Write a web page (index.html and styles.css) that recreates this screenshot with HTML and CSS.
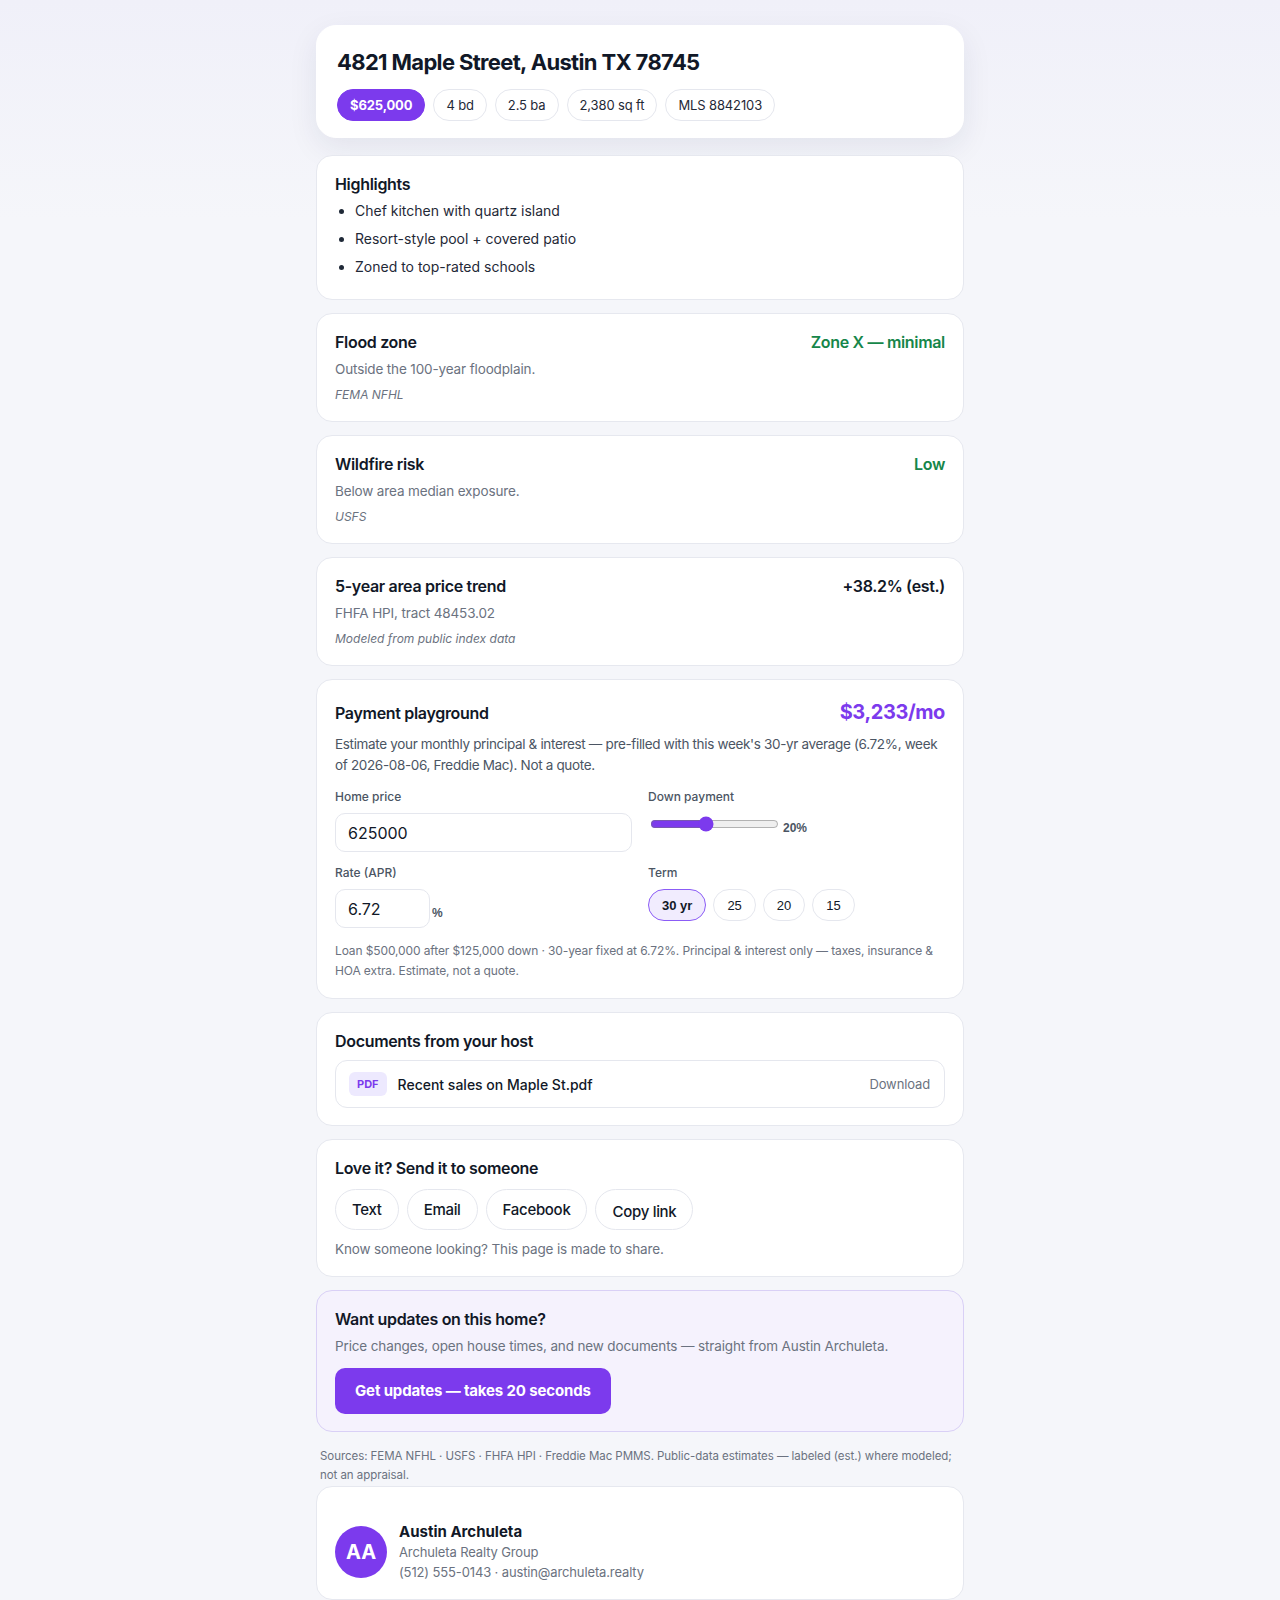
FILE: index.html
```html
<!DOCTYPE html>
<html lang="en">
<head>
    <meta charset="UTF-8">
    <title>4821 Maple Street, Austin TX 78745</title>
    <meta name="viewport" content="width=device-width, initial-scale=1.0">
    <link rel="stylesheet" href="styles.css">
</head>
<body>
    <main class="page">
        <header class="card hero">
            <h1>4821 Maple Street, Austin TX 78745</h1>
            <div class="pills">
                <span class="pill price">$625,000</span>
                <span class="pill">4 bd</span>
                <span class="pill">2.5 ba</span>
                <span class="pill">2,380 sq ft</span>
                <span class="pill">MLS 8842103</span>
            </div>
        </header>

        <section class="card">
            <h2>Highlights</h2>
            <ul class="highlights">
                <li>Chef kitchen with quartz island</li>
                <li>Resort-style pool + covered patio</li>
                <li>Zoned to top-rated schools</li>
            </ul>
        </section>

        <section class="card fact">
            <div class="head">
                <h2>Flood zone</h2>
                <span class="value good">Zone X — minimal</span>
            </div>
            <p class="sub">Outside the 100-year floodplain.</p>
            <p class="src">FEMA NFHL</p>
        </section>

        <section class="card fact">
            <div class="head">
                <h2>Wildfire risk</h2>
                <span class="value good">Low</span>
            </div>
            <p class="sub">Below area median exposure.</p>
            <p class="src">USFS</p>
        </section>

        <section class="card fact">
            <div class="head">
                <h2>5-year area price trend</h2>
                <span class="value">+38.2% (est.)</span>
            </div>
            <p class="sub">FHFA HPI, tract 48453.02</p>
            <p class="src">Modeled from public index data</p>
        </section>

        <section class="card calc">
            <div class="head">
                <h2>Payment playground</h2>
                <span class="monthly" id="monthly">$3,233/mo</span>
            </div>
            <p class="intro">Estimate your monthly principal &amp; interest — pre-filled with this week's 30-yr average (6.72%, week of 2026-08-06, Freddie Mac). Not a quote.</p>
            <div class="fields">
                <label class="field">
                    <span class="label">Home price</span>
                    <input class="text-input" id="price" type="text" value="625000">
                </label>
                <div class="field">
                    <span class="label">Down payment</span>
                    <div class="inline">
                        <input id="down" type="range" min="5" max="40" value="20">
                        <output class="unit" id="down-out">20%</output>
                    </div>
                </div>
                <label class="field">
                    <span class="label">Rate (APR)</span>
                    <div class="inline">
                        <input class="text-input rate" id="rate" type="text" value="6.72">
                        <span class="unit">%</span>
                    </div>
                </label>
                <div class="field">
                    <span class="label">Term</span>
                    <div class="terms">
                        <button class="term active" data-years="30">30 yr</button>
                        <button class="term" data-years="25">25</button>
                        <button class="term" data-years="20">20</button>
                        <button class="term" data-years="15">15</button>
                    </div>
                </div>
            </div>
            <p class="fine" id="summary">Loan $500,000 after $125,000 down · 30-year fixed at 6.72%. Principal &amp; interest only — taxes, insurance &amp; HOA extra. Estimate, not a quote.</p>
        </section>

        <section class="card">
            <h2>Documents from your host</h2>
            <div class="doc">
                <span class="badge">PDF</span>
                <span class="doc-name">Recent sales on Maple St.pdf</span>
                <a class="download" href="#">Download</a>
            </div>
        </section>

        <section class="card">
            <h2>Love it? Send it to someone</h2>
            <div class="share">
                <button class="share-btn">Text</button>
                <button class="share-btn">Email</button>
                <button class="share-btn">Facebook</button>
                <button class="share-btn copy">Copy link</button>
            </div>
            <p class="note">Know someone looking? This page is made to share.</p>
        </section>

        <section class="card updates">
            <h2>Want updates on this home?</h2>
            <p class="sub">Price changes, open house times, and new documents — straight from Austin Archuleta.</p>
            <button class="cta">Get updates — takes 20 seconds</button>
        </section>

        <p class="sources">Sources: FEMA NFHL · USFS · FHFA HPI · Freddie Mac PMMS. Public-data estimates — labeled (est.) where modeled; not an appraisal.</p>

        <section class="card agent">
            <div class="avatar">AA</div>
            <div class="agent-info">
                <div class="agent-name">Austin Archuleta</div>
                <div class="agent-line">Archuleta Realty Group</div>
                <div class="agent-line">(512) 555-0143 · austin@archuleta.realty</div>
            </div>
        </section>
    </main>

    <script>
        const priceInput = document.getElementById('price');
        const downInput = document.getElementById('down');
        const downOut = document.getElementById('down-out');
        const rateInput = document.getElementById('rate');
        const monthly = document.getElementById('monthly');
        const summary = document.getElementById('summary');
        const terms = document.querySelectorAll('.term');
        let years = 30;

        const money = n => '$' + Math.round(n).toLocaleString('en-US');

        function recalc() {
            const price = parseFloat(priceInput.value) || 0;
            const downPct = parseFloat(downInput.value) || 0;
            const rate = parseFloat(rateInput.value) || 0;
            const down = price * downPct / 100;
            const loan = price - down;
            const r = rate / 100 / 12;
            const n = years * 12;
            const pay = r ? loan * r / (1 - Math.pow(1 + r, -n)) : loan / n;

            downOut.textContent = downPct + '%';
            monthly.textContent = money(pay) + '/mo';
            summary.textContent = 'Loan ' + money(loan) + ' after ' + money(down) + ' down · ' + years +
                '-year fixed at ' + rate + '%. Principal & interest only — taxes, insurance & HOA extra. Estimate, not a quote.';
        }

        terms.forEach(btn => {
            btn.addEventListener('click', () => {
                terms.forEach(b => b.classList.remove('active'));
                btn.classList.add('active');
                years = parseInt(btn.dataset.years, 10);
                recalc();
            });
        });

        [priceInput, downInput, rateInput].forEach(el => el.addEventListener('input', recalc));
    </script>
</body>
</html>
```

FILE: styles.css
```css
body {
    margin: 0;
    background: linear-gradient(180deg, #f0f0f9 0, #f5f6fa 220px);
    color: #111827;
    font-family: Inter, 'Noto Sans', sans-serif;
    font-size: 14px;
}
.page {
    max-width: 648px;
    margin: 0 auto;
    padding: 25px 16px 40px;
}
.card {
    background: #fff;
    border: 1px solid #e6e8ef;
    border-radius: 16px;
    padding: 17px 18px;
    margin-bottom: 13px;
}
h1, h2, p {
    margin: 0;
}
h2 {
    font-size: 16px;
    line-height: 22px;
    font-weight: 600;
    letter-spacing: -0.02em;
}

/* top summary */
.hero {
    border-color: #fff;
    border-radius: 20px;
    padding: 23px 20px 16px;
    margin-bottom: 17px;
    box-shadow: 0 10px 30px rgba(28, 32, 72, 0.08);
}
.hero h1 {
    font-size: 22px;
    line-height: 27px;
    font-weight: 700;
    letter-spacing: -0.03em;
    margin-bottom: 13px;
}
.pills {
    display: flex;
    gap: 8px;
}
.pill {
    padding: 6px 12px;
    font-size: 13px;
    line-height: 18px;
    letter-spacing: -0.01em;
    border: 1px solid #e5e7ee;
    border-radius: 999px;
    color: #1f2937;
}
.pill.price {
    background: #7c3aed;
    border-color: #7c3aed;
    color: #fff;
    font-weight: 700;
}

.highlights {
    margin: 5px 0 4px;
    padding-left: 20px;
    color: #1f2937;
}
.highlights li {
    line-height: 22px;
}
.highlights li + li {
    margin-top: 6px;
}

/* fact cards */
.head {
    display: flex;
    justify-content: space-between;
    align-items: baseline;
    margin-bottom: 6px;
}
.value {
    font-size: 16px;
    font-weight: 600;
    letter-spacing: -0.02em;
}
.value.good {
    color: #16864a;
}
.sub,
.intro,
.note {
    font-size: 13.5px;
    letter-spacing: -0.01em;
    color: #6b7280;
    line-height: 20px;
}
.src {
    margin-top: 7px;
    font-size: 12px;
    line-height: 18px;
    font-style: italic;
    color: #6b7280;
}

/* mortgage calculator */
.calc {
    padding-top: 19px;
}
.calc .head {
    margin-bottom: 9px;
}
.monthly {
    font-size: 20px;
    line-height: 26px;
    font-weight: 700;
    letter-spacing: -0.02em;
    color: #7c3aed;
}
.intro {
    color: #4b5563;
    line-height: 21px;
    letter-spacing: -0.025em;
}
.fields {
    display: grid;
    grid-template-columns: 1fr 1fr;
    column-gap: 16px;
    row-gap: 13px;
    margin-top: 13px;
}
.field {
    display: flex;
    flex-direction: column;
    align-items: flex-start;
}
.label {
    font-size: 12px;
    line-height: 16px;
    font-weight: 500;
    color: #4b5563;
    margin-bottom: 8px;
}
.text-input {
    box-sizing: border-box;
    width: 100%;
    height: 39px;
    padding: 9px 12px;
    border: 1px solid #e5e7ee;
    border-radius: 10px;
    font-family: inherit;
    font-size: 16px;
    color: #111827;
    background: #fff;
}
.text-input.rate {
    width: 95px;
}
.inline {
    display: flex;
    align-items: center;
    gap: 2px;
}
input[type="range"] {
    accent-color: #7c3aed;
}
.unit {
    font-family: 'Liberation Sans', Arial, sans-serif;
    font-size: 12px;
    font-weight: 700;
    color: #4b5563;
    padding-top: 8px;
}
.terms {
    display: flex;
    gap: 7px;
}
.term {
    height: 32px;
    padding: 0 13px;
    border: 1px solid #e5e7ee;
    border-radius: 999px;
    background: #fff;
    font-family: 'Liberation Sans', Arial, sans-serif;
    font-size: 13px;
    color: #111827;
    cursor: pointer;
}
.term.active {
    background: #f1ecfe;
    border-color: #8b5cf6;
    font-weight: 700;
}
.fine {
    margin-top: 13px;
    font-size: 12px;
    line-height: 20px;
    letter-spacing: -0.01em;
    color: #6b7280;
}

/* documents */
.doc {
    display: flex;
    align-items: center;
    gap: 11px;
    margin-top: 8px;
    padding: 11px 14px 11px 13px;
    border: 1px solid #e5e7ee;
    border-radius: 12px;
}
.badge {
    padding: 0 8px;
    line-height: 24px;
    border-radius: 6px;
    background: #ede9fe;
    color: #7c3aed;
    font-size: 11px;
    font-weight: 700;
}
.doc-name {
    flex: 1;
    font-weight: 500;
}
.download {
    color: #6b7280;
    font-size: 13px;
    letter-spacing: -0.01em;
    text-decoration: none;
}

/* sharing */
.share {
    display: flex;
    gap: 8px;
    margin: 10px 0 9px;
}
.share-btn {
    padding: 9px 16px;
    border: 1px solid #e5e7ee;
    border-radius: 999px;
    background: #fff;
    font-family: inherit;
    font-size: 15px;
    line-height: 21px;
    font-weight: 500;
    letter-spacing: -0.02em;
    color: #111827;
    cursor: pointer;
}
.share-btn.copy {
    padding: 11px 16px 7px;
}

.updates {
    background: #f5f2fd;
    border-color: #d9d0f6;
}
.updates .sub {
    margin-top: 6px;
}
.cta {
    margin-top: 12px;
    padding: 13px 20px;
    border: none;
    border-radius: 10px;
    background: #7c3aed;
    color: #fff;
    font-family: inherit;
    font-size: 15px;
    line-height: 20px;
    font-weight: 700;
    letter-spacing: -0.01em;
    cursor: pointer;
}

.sources {
    margin: 15px 4px 2px;
    font-size: 11.5px;
    line-height: 18.5px;
    letter-spacing: -0.005em;
    color: #6b7280;
}

/* host card */
.agent {
    display: flex;
    align-items: center;
    gap: 12px;
    padding-top: 34px;
}
.avatar {
    width: 52px;
    height: 52px;
    border-radius: 50%;
    background: #7c3aed;
    color: #fff;
    display: flex;
    align-items: center;
    justify-content: center;
    font-size: 20px;
    font-weight: 700;
}
.agent-name {
    font-size: 15px;
    line-height: 21px;
    font-weight: 700;
}
.agent-line {
    font-size: 13px;
    line-height: 20px;
    letter-spacing: -0.01em;
    color: #6b7280;
}
```
